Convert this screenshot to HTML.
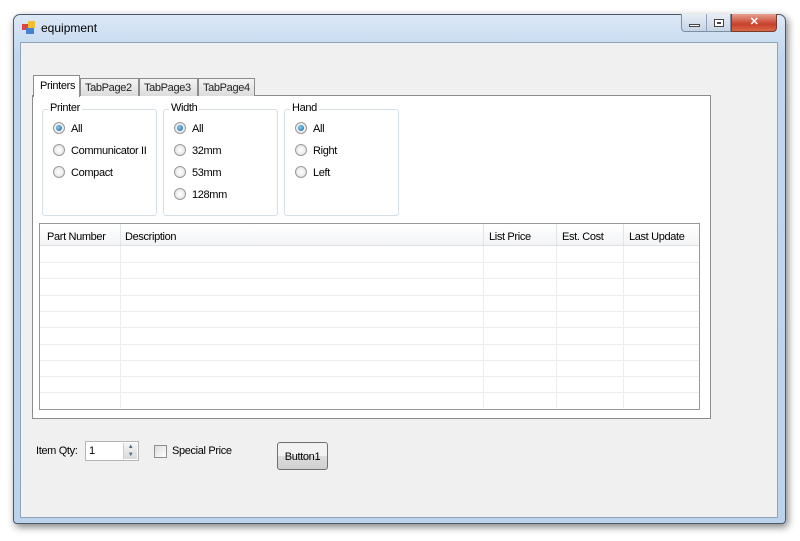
<!DOCTYPE html>
<html><head><style>
*{margin:0;padding:0;box-sizing:border-box}
body{width:800px;height:541px;background:#fff;position:relative;overflow:hidden;font-family:"Liberation Sans",sans-serif;font-size:11px;color:#000;letter-spacing:-0.35px}
.a{position:absolute}
.win{left:13px;top:14px;width:773px;height:510px;border:1px solid #4a5a6a;border-radius:7px 7px 4px 4px;background:linear-gradient(#dbe8f6,#c2d7ee 40px,#bcd3ec);box-shadow:2px 3px 8px rgba(0,0,0,.5)}
.client{left:20px;top:42px;width:758px;height:476px;background:#f0f0f0;border:1px solid #8ea4bc}
.radio{width:12px;height:12px;border-radius:50%;border:1px solid #9a9a9a;background:radial-gradient(#fff,#ddd)}
.radio.on::after{content:"";position:absolute;left:2px;top:2px;width:6px;height:6px;border-radius:50%;background:radial-gradient(circle at 40% 40%,#7fd0f0,#1a5a90)}
.gb{border:1px solid #d5dfe5;border-radius:3px;background:#fff}
.lbl{background:#fff;padding:0 2px}
.tab{top:78px;height:18px;border:1px solid #8c8c8c;border-bottom:none;background:linear-gradient(#f4f4f4,#dcdcdc);padding:3px 0 0 4px;color:#222}
.hl{left:40px;width:659px;height:1px;background:#ececec}
.vl{top:246px;width:1px;height:162px;background:#ececec}
.t{margin-top:1px}
</style></head><body>
<div class="a win"></div>
<div class="a" style="left:22px;top:21px;width:14px;height:14px">
<div class="a" style="left:0;top:3px;width:6px;height:6px;background:#d44"></div>
<div class="a" style="left:6px;top:0;width:7px;height:7px;background:#f0c030"></div>
<div class="a" style="left:4px;top:7px;width:8px;height:6px;background:#4a80d0"></div></div>
<div class="a" style="left:41px;top:21px;font-size:12px;letter-spacing:0">equipment</div>
<div class="a" style="left:681px;top:14px;width:50px;height:18px;border:1px solid #7b8ea4;border-top:none;border-radius:0 0 0 4px;background:linear-gradient(#e8eef6,#c6d4e4)"></div>
<div class="a" style="left:706px;top:14px;width:1px;height:18px;background:#8ea0b4"></div>
<div class="a" style="left:689px;top:24px;width:11px;height:3px;border:1px solid #444;background:#fff"></div>
<div class="a" style="left:714px;top:19px;width:10px;height:8px;border:1px solid #444;background:#fff;box-shadow:inset 0 0 0 2px #fff,inset 0 0 0 3px #444"></div>
<div class="a" style="left:731px;top:14px;width:46px;height:18px;border:1px solid #7a3a30;border-top:none;border-radius:0 0 4px 0;background:linear-gradient(#e8a090,#c8402c 60%,#d86848);color:#fff;font-weight:bold;font-size:11px;text-align:center;line-height:16px">✕</div>
<div class="a client"></div>
<div class="a" style="left:32px;top:95px;width:679px;height:324px;border:1px solid #8c8c8c;background:#fff"></div>
<div class="a tab" style="left:80px;width:59px">TabPage2</div>
<div class="a tab" style="left:139px;width:59px">TabPage3</div>
<div class="a tab" style="left:198px;width:57px">TabPage4</div>
<div class="a" style="left:33px;top:75px;width:47px;height:22px;border:1px solid #8c8c8c;border-bottom:none;background:#fff;padding:4px 0 0 6px">Printers</div>
<div class="a gb" style="left:42px;top:109px;width:115px;height:107px"></div>
<div class="a gb" style="left:163px;top:109px;width:115px;height:107px"></div>
<div class="a gb" style="left:284px;top:109px;width:115px;height:107px"></div>
<div class="a lbl" style="left:48px;top:102px">Printer</div>
<div class="a lbl" style="left:169px;top:102px">Width</div>
<div class="a lbl" style="left:290px;top:102px">Hand</div>
<div class="a radio on" style="left:53px;top:122px"></div><div class="a" style="left:71px;top:123px">All</div>
<div class="a radio" style="left:53px;top:144px"></div><div class="a" style="left:71px;top:145px">Communicator II</div>
<div class="a radio" style="left:53px;top:166px"></div><div class="a" style="left:71px;top:167px">Compact</div>
<div class="a radio on" style="left:174px;top:122px"></div><div class="a" style="left:192px;top:123px">All</div>
<div class="a radio" style="left:174px;top:144px"></div><div class="a" style="left:192px;top:145px">32mm</div>
<div class="a radio" style="left:174px;top:166px"></div><div class="a" style="left:192px;top:167px">53mm</div>
<div class="a radio" style="left:174px;top:188px"></div><div class="a" style="left:192px;top:189px">128mm</div>
<div class="a radio on" style="left:295px;top:122px"></div><div class="a" style="left:313px;top:123px">All</div>
<div class="a radio" style="left:295px;top:144px"></div><div class="a" style="left:313px;top:145px">Right</div>
<div class="a radio" style="left:295px;top:166px"></div><div class="a" style="left:313px;top:167px">Left</div>
<div class="a" style="left:39px;top:223px;width:661px;height:187px;border:1px solid #979797;background:#fff"></div>
<div class="a" style="left:40px;top:224px;width:659px;height:22px;background:linear-gradient(#fff,#f3f4f6);border-bottom:1px solid #e0e0e0"></div>
<div class="a" style="left:120px;top:224px;width:1px;height:22px;background:#e0e3e8"></div>
<div class="a" style="left:483px;top:224px;width:1px;height:22px;background:#e0e3e8"></div>
<div class="a" style="left:556px;top:224px;width:1px;height:22px;background:#e0e3e8"></div>
<div class="a" style="left:623px;top:224px;width:1px;height:22px;background:#e0e3e8"></div>
<div class="a" style="left:47px;top:231px">Part Number</div>
<div class="a" style="left:125px;top:231px">Description</div>
<div class="a" style="left:489px;top:231px">List Price</div>
<div class="a" style="left:562px;top:231px">Est. Cost</div>
<div class="a" style="left:629px;top:231px">Last Update</div>
<div class="a hl" style="top:262px"></div><div class="a hl" style="top:278px"></div><div class="a hl" style="top:295px"></div>
<div class="a hl" style="top:311px"></div><div class="a hl" style="top:327px"></div><div class="a hl" style="top:344px"></div>
<div class="a hl" style="top:360px"></div><div class="a hl" style="top:376px"></div><div class="a hl" style="top:392px"></div>
<div class="a vl" style="left:120px"></div><div class="a vl" style="left:483px"></div><div class="a vl" style="left:556px"></div><div class="a vl" style="left:623px"></div>
<div class="a" style="left:36px;top:445px">Item Qty:</div>
<div class="a" style="left:85px;top:441px;width:54px;height:20px;border:1px solid #b5b5b5;background:#fff;padding:3px 0 0 3px">1</div>
<div class="a" style="left:123px;top:443px;width:14px;height:16px;background:linear-gradient(#f4f4f4,#dadada);border-left:1px solid #ccc;font-size:6px;color:#4a6a90;text-align:center;line-height:8px">▲<br>▼</div>
<div class="a" style="left:154px;top:445px;width:13px;height:13px;border:1px solid #8f8f8f;background:linear-gradient(135deg,#ddd,#fff)"></div>
<div class="a" style="left:172px;top:445px">Special Price</div>
<div class="a" style="left:277px;top:442px;width:51px;height:28px;border:1px solid #707070;border-radius:3px;background:linear-gradient(#f2f2f2 50%,#dddddd 50%,#cfcfcf);text-align:center;line-height:28px">Button1</div>
</body></html>
